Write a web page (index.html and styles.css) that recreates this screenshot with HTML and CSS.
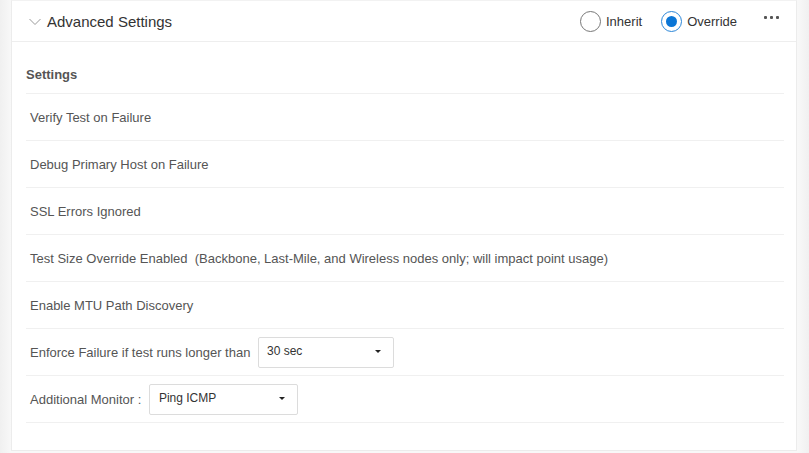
FILE: index.html
```html
<!DOCTYPE html>
<html>
<head>
<meta charset="utf-8">
<link rel="stylesheet" href="styles.css">
</head>
<body>
<div class="page">
  <div class="panel">
    <div class="header">
      <svg class="chev" width="12" height="8" viewBox="0 0 12 8"><path d="M0.5 1 L6 6.5 L11.5 1" fill="none" stroke="#999" stroke-width="1"/></svg>
      <div class="title">Advanced Settings</div>
      <div class="radios">
        <label class="radio"><span class="circle"></span>Inherit</label>
        <label class="radio on"><span class="circle"><span class="dot"></span></span>Override</label>
      </div>
      <div class="more"><span></span><span></span><span></span></div>
    </div>
    <div class="body">
      <div class="section">Settings</div>
      <div class="row">Verify Test on Failure</div>
      <div class="row">Debug Primary Host on Failure</div>
      <div class="row">SSL Errors Ignored</div>
      <div class="row">Test Size Override Enabled&nbsp; (Backbone, Last-Mile, and Wireless nodes only; will impact point usage)</div>
      <div class="row">Enable MTU Path Discovery</div>
      <div class="row">Enforce Failure if test runs longer than <div class="select w1"><span>30 sec</span><i class="caret"></i></div></div>
      <div class="row">Additional Monitor : <div class="select w2"><span>Ping ICMP</span><i class="caret"></i></div></div>
    </div>
  </div>
</div>
</body>
</html>
```
FILE: styles.css
```css
html, body { margin: 0; padding: 0; }
body {
  background: #f7f7f7;
  font-family: "Liberation Sans", Arial, sans-serif;
  width: 809px;
  height: 453px;
  overflow: hidden;
}
.page {
  padding: 0 11px 0 11px;
  background: linear-gradient(to right, #f0f0f0 0, #f8f8f8 11px, #f8f8f8 798px, #f0f0f0 809px);
  height: 453px;
  box-sizing: border-box;
}
.panel {
  background: #fff;
  border: 1px solid #ececec;
  border-top-color: #f2f2f2;
  width: 786px;
  height: 451px;
  box-sizing: border-box;
}
.header {
  display: flex;
  align-items: center;
  height: 41px;
  border-bottom: 1px solid #eeeeee;
  padding-left: 17px;
  padding-top: 1px;
  box-sizing: border-box;
}
.chev { margin-top: 1px; }
.title {
  font-size: 15px;
  color: #333;
  margin-left: 6px;
  flex: 1;
}
.radios { display: flex; align-items: center; }
.radio {
  display: flex;
  align-items: center;
  font-size: 13px;
  color: #333;
  margin-right: 19px;
}
.radio.on { margin-right: 27px; }
.circle {
  width: 21px;
  height: 21px;
  border: 1px solid #777;
  border-radius: 50%;
  box-sizing: border-box;
  margin-right: 5px;
  display: flex;
  align-items: center;
  justify-content: center;
}
.radio.on .circle { border-color: #2a86d8; }
.dot {
  width: 11px;
  height: 11px;
  border-radius: 50%;
  background: #0b76d6;
}
.more {
  display: flex;
  gap: 3px;
  margin-right: 17px;
  margin-top: -8px;
}
.more span {
  width: 3px;
  height: 3px;
  background: #555;
  border-radius: 1px;
}
.body {
  padding: 0 12px 0 14px;
}
.section {
  font-size: 13px;
  font-weight: bold;
  color: #555;
  height: 52px;
  line-height: 13px;
  padding-top: 26px;
  box-sizing: border-box;
  border-bottom: 1px solid #f0f0f0;
}
.row {
  height: 47px;
  box-sizing: border-box;
  border-bottom: 1px solid #f0f0f0;
  display: flex;
  align-items: center;
  padding-left: 4px;
  font-size: 13px;
  color: #555;
  white-space: pre;
}
.select {
  display: flex;
  align-items: center;
  justify-content: space-between;
  height: 31px;
  border: 1px solid #dcdcdc;
  border-radius: 2px;
  box-sizing: border-box;
  padding: 0 12px 3px 8px;
  margin-left: 4px;
  color: #333;
  font-size: 12px;
}
.w1 { width: 136px; }
.w2 { width: 149px; margin-left: 4px; padding-left: 9px; }
.caret {
  width: 0;
  height: 0;
  border-left: 3px solid transparent;
  border-right: 3px solid transparent;
  border-top: 3px solid #222;
  margin-top: 2px;
}
```
